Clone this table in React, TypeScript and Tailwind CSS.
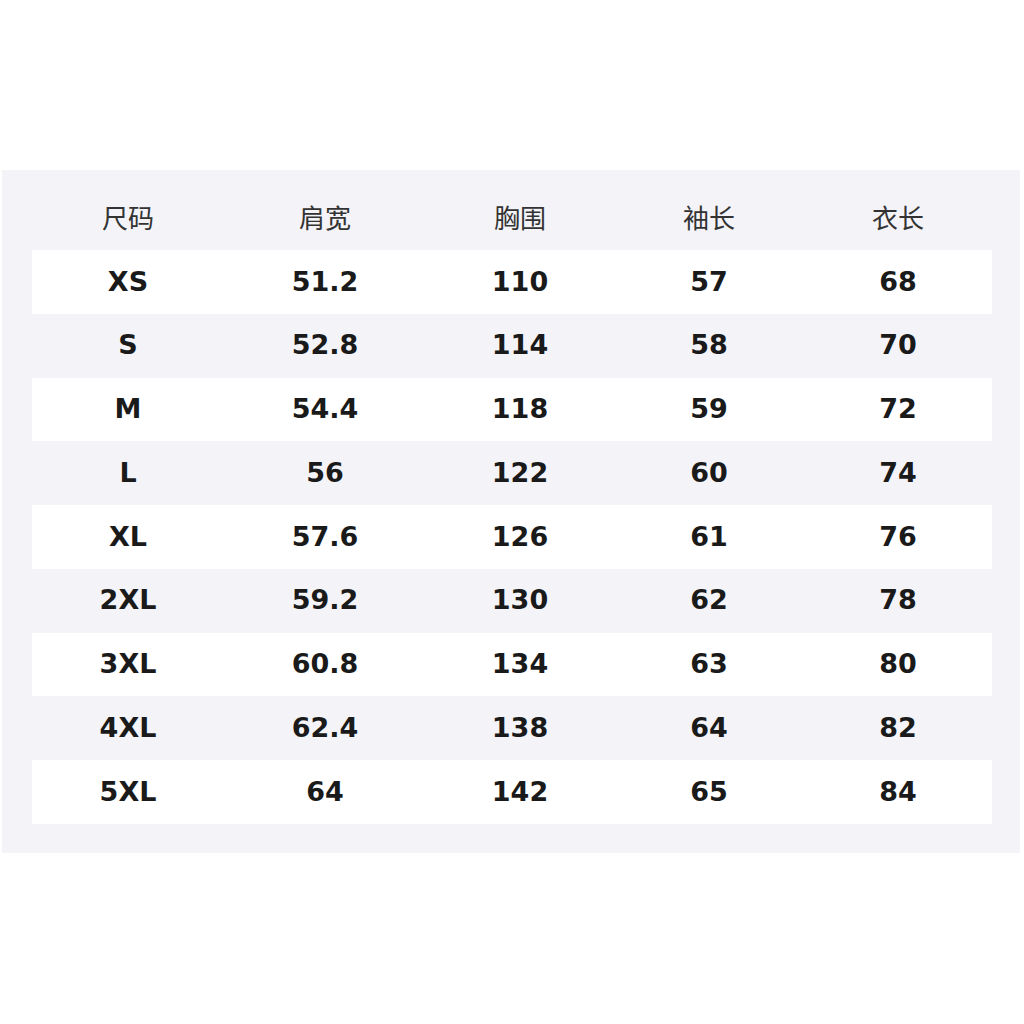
const headers = ["尺码", "肩宽", "胸围", "袖长", "衣长"];

const rows = [
  ["XS", "51.2", "110", "57", "68"],
  ["S", "52.8", "114", "58", "70"],
  ["M", "54.4", "118", "59", "72"],
  ["L", "56", "122", "60", "74"],
  ["XL", "57.6", "126", "61", "76"],
  ["2XL", "59.2", "130", "62", "78"],
  ["3XL", "60.8", "134", "63", "80"],
  ["4XL", "62.4", "138", "64", "82"],
  ["5XL", "64", "142", "65", "84"],
];

const cols = "grid grid-cols-[192px_202px_188px_190px_188px]";

export default function App() {
  return (
    <div className="w-[1024px] h-[1024px] bg-white pt-[170px]">
      <div className="ml-[2px] w-[1018px] h-[683px] bg-[#f4f4f8] pl-[30px] pr-[28px] pt-[16px]">
        <div
          className={`${cols} h-[64px] pb-[4px] items-center text-center text-[26px] text-[#333] font-['Noto_Sans_CJK_SC',sans-serif]`}
        >
          {headers.map((h) => (
            <div key={h}>{h}</div>
          ))}
        </div>
        {rows.map((r, i) => (
          <div
            key={r[0]}
            className={`${cols} h-[63.75px] items-center text-center text-[27px] font-bold text-[#1a1a1a] font-['DejaVu_Sans',sans-serif] ${
              i % 2 === 0 ? "bg-white" : ""
            }`}
          >
            {r.map((c, j) => (
              <div key={j}>{c}</div>
            ))}
          </div>
        ))}
      </div>
    </div>
  );
}
